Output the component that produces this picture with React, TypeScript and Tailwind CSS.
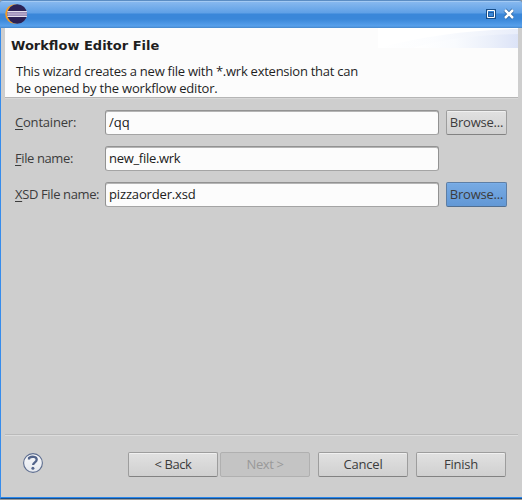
import React from 'react';

const face = "font-['Open_Sans','Noto_Sans',sans-serif]";

function EclipseLogo() {
  return (
    <svg width="23" height="20" viewBox="0 0 23 20" className="block">
      <circle cx="10" cy="10" r="9.8" fill="#f49b20" />
      <circle cx="12.3" cy="10" r="9.8" fill="#6fa9e4" />
      <circle cx="12.2" cy="10" r="9.8" fill="#2c2255" />
      <path d="M2.5 7h19.4v6H2.5z" fill="#9c8fb8" />
      <path d="M2.5 7h19.4v1H2.5zM2.5 12h19.4v1H2.5z" fill="#e4e0ed" />
      <path d="M2.5 9.2h19.4v1.6H2.5z" fill="#b4a8c8" />
    </svg>
  );
}

function TitleBar() {
  return (
    <header className="flex h-7 shrink-0 items-start justify-between rounded-t-[3px] border-t border-[#5b8dc4] bg-[linear-gradient(to_bottom,#c0dcf8_0px,#86b8ef_1px,#5fa0e6_12px,#3a87d9_13px,#3a87d9_18px,#57a0eb_25px,#4586ca_27px)] pl-[5px] pr-2 pt-[3px]">
      <EclipseLogo />
      <svg width="30" height="13" viewBox="0 0 30 13" className="mt-[4px] block">
        <path d="M2 1h10v10H2z" fill="#174d88" />
        <path d="M3.5 2.5h7v7h-7z" fill="#3a87d9" stroke="#fff" />
        <path d="M4.5 4.5h5v4h-5z" fill="none" stroke="#205a99" />
        <path d="M21 2l8 8M29 2l-8 8" stroke="#28629f" strokeWidth="4" />
        <path d="M21 2l8 8M29 2l-8 8" stroke="#fff" strokeWidth="2.5" />
      </svg>
    </header>
  );
}

function Banner() {
  return (
    <section className="ml-1 mr-[4px] flex h-[71px] shrink-0 border-b border-[#d8d8d8]">
      <div className="flex flex-1 justify-between border-b border-[#b5b5b5] bg-[#fcfcfc]">
        <div className="whitespace-nowrap pl-[6px] text-[#1f1f1f]">
          <h1 className="mt-[9px] h-[17px] font-['DejaVu_Sans'] text-[13px] font-bold leading-[17px]">Workflow Editor File</h1>
          <p className="ml-[5px] mt-[9px] text-[13px] leading-[17px]">
            <span className="tracking-[-0.255px]">This wizard creates a new file with *.wrk extension that can</span><br />
            <span className="tracking-[-0.2px]">be opened by the workflow editor.</span>
          </p>
        </div>
        <svg width="140" height="20" viewBox="0 0 140 20" className="block">
          <defs>
            <linearGradient id="wave"><stop stopColor="#fff" /><stop offset=".4" stopColor="#f9fbfe" /><stop offset=".75" stopColor="#eaeffa" /><stop offset="1" stopColor="#dce3f7" /></linearGradient>
          </defs>
          <path d="M0 0h140v20H0z" fill="#fff" />
          <path d="M0 20C45 8 91 2 140 1v19z" fill="url(#wave)" opacity=".65" />
          <path d="M35 20C63 11 98 7 140 6v14z" fill="url(#wave)" />
        </svg>
      </div>
    </section>
  );
}

type ButtonProps = { children: React.ReactNode; kind?: 'normal' | 'active' | 'disabled'; className: string };

function Button({ children, kind = 'normal', className }: ButtonProps) {
  const looks = {
    normal: 'border-[#9d9d9d] border-b-[#828282] bg-linear-to-b from-[#e1e1e1] to-[#d0d0d0] text-[#3c3c3c] shadow-[inset_0_1px_#f0f0f0]',
    active: 'border-[#5d7ea5] border-b-[#526f90] bg-linear-to-b from-[#77aae3] to-[#6298d6] text-[#3c3c3c] shadow-[inset_0_1px_#79aee9]',
    disabled: 'border-[#b0b0b0] bg-[#c4c4c4] text-[#999999]',
  };
  return (
    <button disabled={kind === 'disabled'} className={`flex h-[25px] shrink-0 items-center justify-center whitespace-nowrap rounded-[2px] border pb-px text-[13px] leading-[18px] ${looks[kind]} ${className}`}>
      {children}
    </button>
  );
}

type FieldProps = { mnemonic: string; label: string; value: string; labelSpacing: string; valueSpacing: string; browse?: 'normal' | 'active' };

function Field({ mnemonic, label, value, labelSpacing, valueSpacing, browse }: FieldProps) {
  return (
    <div className="flex h-[25px] items-center">
      <label className={`w-[90px] whitespace-nowrap pb-px text-[13px] leading-[18px] text-[#3c3c3c] ${labelSpacing}`}>
        <span className="underline decoration-1 underline-offset-2">{mnemonic}</span>{label}
      </label>
      <div className={`flex h-[25px] w-[334px] items-center rounded-[3px] border border-[#929292] border-b-[#a4a4a4] bg-[#fcfcfc] pb-px pl-[3px] text-[13px] leading-[18px] text-[#202020] shadow-[inset_0_1px_#b5b5b5] ${valueSpacing}`}>{value}</div>
      {browse && <Button kind={browse} className="ml-[7px] w-[61px] tracking-[-0.2px]">Browse...</Button>}
    </div>
  );
}

export default function App() {
  return (
    <div className={`flex h-[500px] w-[522px] flex-col overflow-hidden bg-[#999] antialiased ${face}`}>
      <TitleBar />
      <main className="flex h-[471px] flex-col border-b border-l border-b-[#174f8b] border-l-[#368cec] bg-[#cecece]">
        <Banner />
        <div className="mt-[11px] flex flex-col gap-[11px] pl-[14px]">
          <Field mnemonic="C" label="ontainer:" value="/qq" labelSpacing="tracking-[-0.2px]" valueSpacing="tracking-normal" browse="normal" />
          <Field mnemonic="F" label="ile name:" value="new_file.wrk" labelSpacing="tracking-[-0.4px]" valueSpacing="tracking-[-0.3px]" />
          <Field mnemonic="X" label="SD File name:" value="pizzaorder.xsd" labelSpacing="tracking-[-0.37px]" valueSpacing="tracking-[-0.15px]" browse="active" />
        </div>
        <footer className="mt-auto flex h-[64px] flex-col border-b border-[#2987ed]">
          <div className="ml-1 mr-[4px] h-[2px] border-b border-t border-b-[#dddddd] border-t-[#bababa]" />
          <div className="mt-4 flex h-[25px] pl-[22px]">
            <div className="mr-[85px] mt-[1px] flex size-5 items-center justify-center">
              <svg width="20" height="20" viewBox="0 0 20 20" className="block">
                <defs><linearGradient id="help" x2="0" y2="1"><stop stopColor="#f8f9fb" /><stop offset="1" stopColor="#e5e8ee" /></linearGradient></defs>
                <circle cx="10" cy="10" r="9.4" fill="url(#help)" stroke="#5d6d8f" strokeWidth="1.1" />
                <path d="M6 6.5V5C9 2.8 13.7 3.6 13.7 6.7c0 2.6-3.6 2.7-3.6 5.3" fill="none" stroke="#52648b" strokeWidth="2.3" />
                <circle cx="9.9" cy="15.3" r="1.5" fill="#52648b" />
              </svg>
            </div>
            <Button className="w-[90px] tracking-[-0.4px]">&lt; Back</Button>
            <Button kind="disabled" className="ml-[2px] w-[90px] tracking-[-0.4px]">Next &gt;</Button>
            <Button className="ml-2 w-[90px] tracking-[-0.2px]">Cancel</Button>
            <Button className="ml-2 w-[90px] tracking-[-0.2px]">Finish</Button>
          </div>
        </footer>
      </main>
    </div>
  );
}
